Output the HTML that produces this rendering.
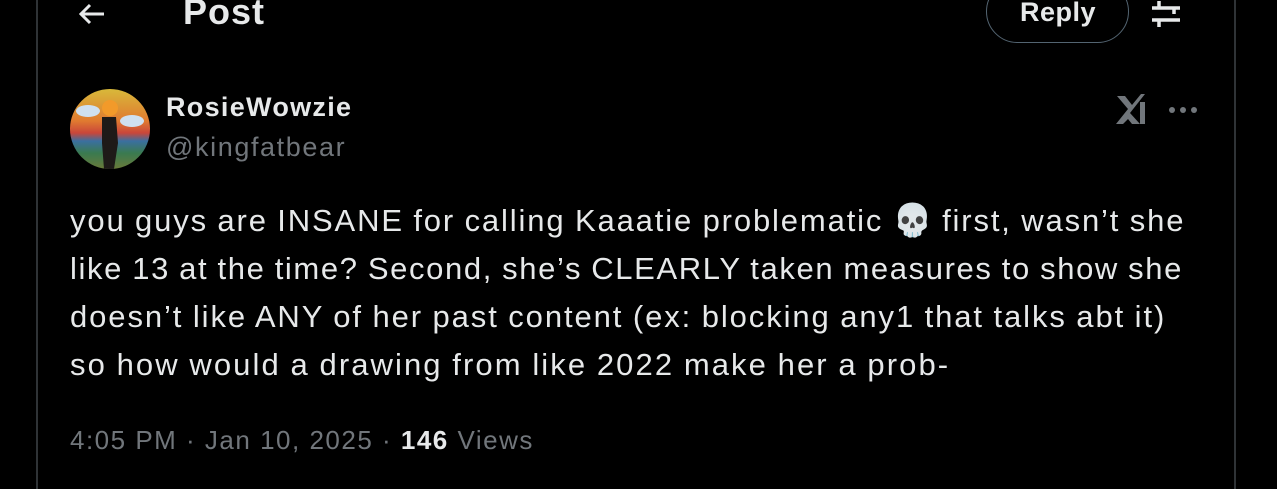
<!DOCTYPE html>
<html><head><meta charset="utf-8"><style>
html,body{margin:0;padding:0;background:#000;width:1277px;height:489px;overflow:hidden;font-family:"Liberation Sans",sans-serif;color:#e7e9ea}
.vl{position:absolute;top:0;bottom:0;width:2px;background:#2f3336}
.abs{position:absolute;white-space:nowrap}
.body{position:absolute;left:70px;top:196px;font-size:31px;line-height:48px;white-space:nowrap;letter-spacing:1.75px;word-spacing:-1px}
</style></head><body>
<div class="vl" style="left:36px"></div>
<div class="vl" style="left:1234px"></div>
<svg class="abs" style="left:76px;top:2px" width="32" height="24" viewBox="0 0 32 24"><path d="M28 12H5M14 3L5 12l9 9" stroke="#e7e9ea" stroke-width="3" fill="none"/></svg>
<div class="abs" style="left:183px;top:-9px;font-size:36px;font-weight:bold;letter-spacing:1px">Post</div>
<div class="abs" style="left:986px;top:-20px;width:143px;height:63px;border:1.5px solid #536471;border-radius:32px;box-sizing:border-box"></div>
<div class="abs" style="left:1020px;top:-3px;font-size:27px;font-weight:bold;letter-spacing:0.5px">Reply</div>
<svg class="abs" style="left:1150px;top:0" width="34" height="28" viewBox="0 0 34 28"><path d="M2 8H30M2 20H30M9 1V8M24 8V14M9 20V27" stroke="#e7e9ea" stroke-width="3.5" fill="none"/></svg>
<svg class="abs" style="left:70px;top:89px" width="80" height="80" viewBox="0 0 80 80"><defs><clipPath id="c"><circle cx="40" cy="40" r="40"/></clipPath><linearGradient id="g" x1="0" y1="0" x2="0" y2="1"><stop offset="0" stop-color="#d8b93a"/><stop offset=".4" stop-color="#e07a30"/><stop offset=".55" stop-color="#c9463a"/><stop offset=".65" stop-color="#3a6fa0"/><stop offset=".8" stop-color="#3a7a50"/><stop offset="1" stop-color="#6a7a3a"/></linearGradient></defs><g clip-path="url(#c)"><rect width="80" height="80" fill="url(#g)"/><ellipse cx="18" cy="22" rx="12" ry="6" fill="#cfe0f0"/><ellipse cx="62" cy="32" rx="12" ry="6" fill="#cfe0f0"/><circle cx="40" cy="19" r="8" fill="#f29a2a"/><path d="M32 28h14l2 26-4 26h-10l-2-26z" fill="#1e1a18"/></g></svg>
<div class="abs" style="left:166px;top:92px;font-size:27px;font-weight:bold;letter-spacing:1.3px">RosieWowzie</div>
<div class="abs" style="left:166px;top:132px;font-size:27px;color:#71767b;letter-spacing:1.6px">@kingfatbear</div>
<svg class="abs" style="left:1114px;top:92px" width="34" height="32" viewBox="0 0 34 32"><path d="M2 32L14 17 3 4h8l7 9 9-11h4L16 21l10 11h-8l-4-5-5 5z" fill="#71767b"/><path d="M26 10h5v22h-5z" fill="#71767b"/></svg>
<svg class="abs" style="left:1167px;top:104px" width="32" height="12"><circle cx="5" cy="6" r="3" fill="#71767b"/><circle cx="16" cy="6" r="3" fill="#71767b"/><circle cx="27" cy="6" r="3" fill="#71767b"/></svg>
<div class="body"><div style="letter-spacing:1.86px">you guys are INSANE for calling Kaaatie problematic <span style="font-size:32px;color:#ccc;letter-spacing:0">💀</span> first, wasn’t she</div><div style="letter-spacing:1.62px">like 13 at the time? Second, she’s CLEARLY taken measures to show she</div><div style="letter-spacing:1.91px">doesn’t like ANY of her past content (ex: blocking any1 that talks abt it)</div><div style="letter-spacing:2.08px">so how would a drawing from like 2022 make her a prob-</div></div>
<div class="abs" style="left:70px;top:425px;font-size:26px;color:#71767b;letter-spacing:1.5px">4:05 PM · Jan 10, 2025 · <b style="color:#e7e9ea">146</b> Views</div>
</body></html>
